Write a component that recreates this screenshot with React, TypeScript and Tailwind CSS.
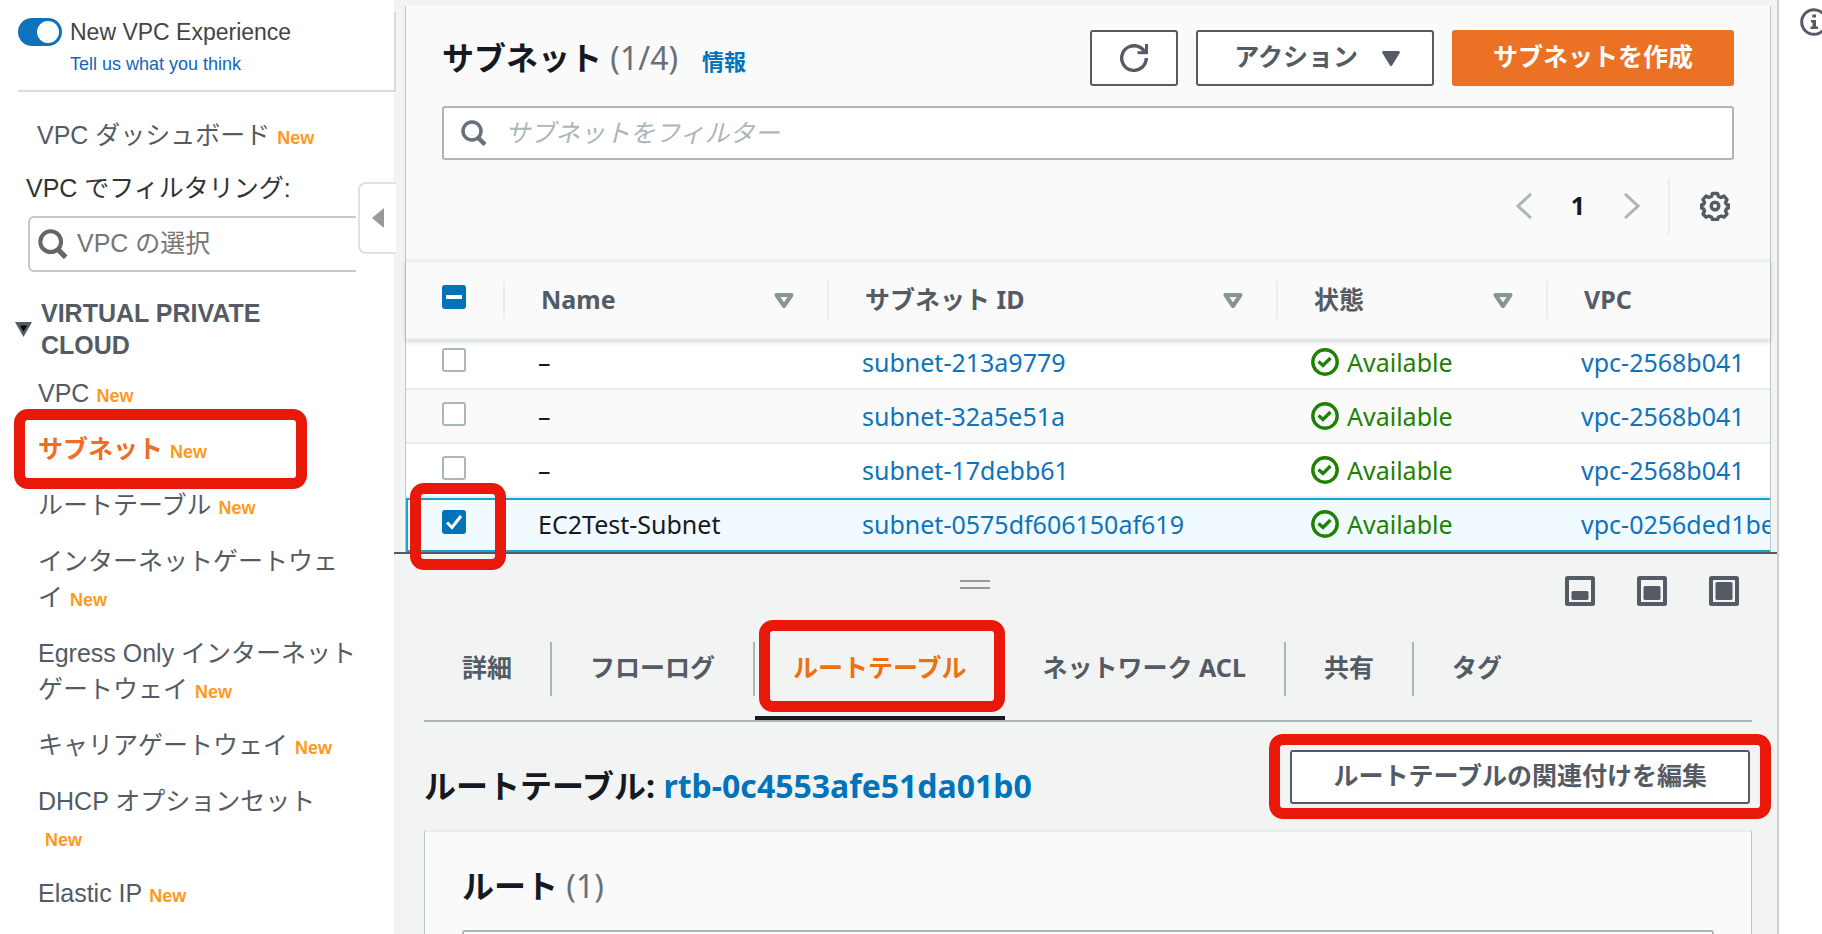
import React from 'react';

const navItems = [
  { label: 'VPC' },
  { label: 'サブネット', active: true },
  { label: 'ルートテーブル' },
  { label: 'インターネットゲートウェイ' },
  { label: 'Egress Only インターネットゲートウェイ' },
  { label: 'キャリアゲートウェイ' },
  { label: 'DHCP オプションセット' },
  { label: 'Elastic IP' },
];

const subnets = [
  { name: '–', id: 'subnet-213a9779', vpc: 'vpc-2568b041', selected: false },
  { name: '–', id: 'subnet-32a5e51a', vpc: 'vpc-2568b041', selected: false },
  { name: '–', id: 'subnet-17debb61', vpc: 'vpc-2568b041', selected: false },
  { name: 'EC2Test-Subnet', id: 'subnet-0575df606150af619', vpc: 'vpc-0256ded1be', selected: true },
];

const columns = [
  { label: 'Name', width: 'w-[324px]' },
  { label: 'サブネット ID', width: 'w-[449px]' },
  { label: '状態', width: 'w-[270px]' },
  { label: 'VPC', width: '' },
];

const tabs = ['詳細', 'フローログ', 'ルートテーブル', 'ネットワーク ACL', '共有', 'タグ'];

const panelSizes = [
  { label: '小', y: 15, h: 9 },
  { label: '中', y: 10, h: 14 },
  { label: '大', y: 6, h: 18 },
];

function Highlight({ className }: { className: string }) {
  return (
    <span
      aria-hidden="true"
      className={`pointer-events-none absolute z-20 rounded-[14px] border-[11px] border-[#e8180b] ${className}`}
    />
  );
}

function NewBadge() {
  return <span className="ml-[7px] inline-block text-lg leading-6 font-bold text-[#ff9a1f]">New</span>;
}

function Checkbox({ label, state }: { label: string; state: 'on' | 'off' | 'mixed' }) {
  return (
    <span className="relative block h-6 w-6">
      <input
        type="checkbox"
        aria-label={label}
        defaultChecked={state === 'on'}
        className={`block h-6 w-6 appearance-none rounded-[3px] ${
          state === 'off' ? 'border-2 border-[#aab7b8] bg-white' : 'bg-[#0073bb]'
        }`}
      />
      {state !== 'off' && (
        <svg viewBox="0 0 24 24" className="pointer-events-none absolute inset-0 h-6 w-6" fill="none" stroke="#fff">
          {state === 'on' ? (
            <path d="M5 12.5 L10 17.5 L19 6" strokeWidth="3" />
          ) : (
            <path d="M4 12 H20" strokeWidth="4" />
          )}
        </svg>
      )}
    </span>
  );
}

function SearchIcon({ className }: { className: string }) {
  return (
    <svg viewBox="0 0 26 26" className={className} fill="none" stroke="currentColor">
      <circle cx="11" cy="11" r="9" strokeWidth="3.5" />
      <path d="M17 17.5 L24 24.5" strokeWidth="4.5" />
    </svg>
  );
}

function StatusIcon() {
  return (
    <svg viewBox="0 0 28 28" className="h-7 w-7 shrink-0" fill="none" stroke="#1d8102" strokeWidth="3.4">
      <circle cx="14" cy="14" r="12.2" />
      <path d="M7.5 13.5 L12 17.5 L19.5 10" />
    </svg>
  );
}

function Sidebar() {
  return (
    <aside className="relative w-[394px] shrink-0 bg-white pt-3 font-['Liberation_Sans','Noto_Sans_CJK_JP',sans-serif] text-[25px] leading-[33px] text-[#545b64]">
      <div className="relative z-10 -mr-0.5 ml-[18px] border-r-2 border-b-2 border-[#d9dcdc] pt-1.5 pb-3.5">
        <label className="flex items-center text-[23px] leading-7 text-[#444]">
          <input type="checkbox" role="switch" defaultChecked className="peer sr-only" />
          <span className="mr-2 flex h-7 w-11 items-center justify-end rounded-full bg-[#0f73bb] px-[3px]">
            <span className="h-[22px] w-[22px] rounded-full bg-white" />
          </span>
          New VPC Experience
        </label>
        <a href="#feedback" className="mt-1.5 ml-[52px] block text-lg leading-6 text-[#1166bb]">
          Tell us what you think
        </a>
      </div>

      <a href="#dashboard" className="mt-[27px] ml-[37px] block">
        VPC ダッシュボード
        <NewBadge />
      </a>

      <label htmlFor="vpc-filter" className="mt-5 ml-[26px] block text-[#333]">
        VPC でフィルタリング:
      </label>
      <div className="mt-[11px] mr-[38px] ml-7 flex h-14 items-center rounded-l-md border-2 border-r-0 border-[#c8c8c8] pl-2">
        <SearchIcon className="h-[30px] w-[30px] shrink-0 text-[#666]" />
        <input
          id="vpc-filter"
          type="text"
          placeholder="VPC の選択"
          className="ml-[9px] w-full min-w-0 pb-0.5 outline-none placeholder:text-[#757575]"
        />
      </div>

      <button
        type="button"
        aria-label="ナビゲーションを閉じる"
        className="absolute top-[182px] -right-0.5 z-10 flex h-[72px] w-[38px] items-center justify-center rounded-l-lg border-2 border-r-0 border-[#dfe2e2] bg-white"
      >
        <svg viewBox="0 0 12 20" className="h-5 w-3" fill="#999">
          <path d="M12 0 V20 L0 10 Z" />
        </svg>
      </button>

      <div className="mt-[25px] ml-[15px] flex items-center leading-8 font-bold">
        <svg viewBox="0 0 17 15" className="mr-[9px] h-[15px] w-[17px] shrink-0">
          <path d="M0 0 H17 L8.5 15 Z" fill="#545b64" />
          <path d="M5 3.5 H12 L8.5 9.5 Z" fill="#000" />
        </svg>
        <h2 className="w-[240px]">VIRTUAL PRIVATE CLOUD</h2>
      </div>

      <ul className="mt-3.5 mr-9 ml-[38px] space-y-5 leading-9">
        {navItems.map((item) => (
          <li key={item.label} className="relative">
            <a href="#nav" className={item.active ? 'font-bold text-[#eb6f25]' : ''}>
              {item.label}
              <NewBadge />
            </a>
            {item.active && <Highlight className="-top-[22px] -left-6 h-20 w-[293px]" />}
          </li>
        ))}
      </ul>
    </aside>
  );
}

function Toolbar() {
  return (
    <div className="bg-[#fafafa] px-9 pt-6 pb-[26px]">
      <div className="flex items-center">
        <h1 className="text-[32px] leading-10 font-bold text-[#16191f]">
          サブネット <span className="font-normal text-[#687078]">(1/4)</span>
        </h1>
        <a href="#info" className="mt-1.5 ml-6 text-[22px] leading-8 font-bold text-[#0073bb]">
          情報
        </a>
        <div className="ml-auto flex gap-[18px] font-bold text-[#545b64]">
          <button
            type="button"
            aria-label="更新"
            className="flex h-14 w-[88px] items-center justify-center rounded-[3px] border-2 border-[#545b64] bg-white"
          >
            <svg viewBox="0 0 28 28" className="h-7 w-7" fill="none" stroke="currentColor" strokeWidth="3.4">
              <path d="M26.3 14 A12.3 12.3 0 1 1 20 3.3 Q23 5 25 8" />
              <path d="M26.5 0 V9" strokeWidth="3" />
              <path d="M17.5 8.7 H28" strokeWidth="3" />
            </svg>
          </button>
          <button
            type="button"
            className="flex h-14 items-center gap-6 rounded-[3px] border-2 border-[#545b64] bg-white pr-8 pl-9"
          >
            <span className="pb-1">アクション</span>
            <svg viewBox="0 0 18 15" className="h-[15px] w-[18px]" fill="currentColor">
              <path d="M1 0 H17 L18 1.5 L9.7 15 H8.3 L0 1.5 Z" />
            </svg>
          </button>
          <button type="button" className="h-14 rounded-[3px] bg-[#eb7125] px-[41px] pb-1 text-white">
            サブネットを作成
          </button>
        </div>
      </div>

      <div className="mt-5 flex h-[54px] items-center rounded-[3px] border-2 border-[#aab7b8] bg-white pl-[17px]">
        <SearchIcon className="h-[26px] w-[26px] shrink-0 text-[#687078]" />
        <input
          type="text"
          aria-label="サブネットをフィルター"
          placeholder="サブネットをフィルター"
          className="ml-[18px] w-full pb-0.5 outline-none placeholder:text-[#aab7b8] placeholder:italic"
        />
      </div>

      <div className="mt-[18px] flex h-14 items-center justify-end">
        <button type="button" aria-label="前のページ">
          <svg viewBox="0 0 16 26" className="h-[26px] w-4" fill="none" stroke="#aab7b8" strokeWidth="3">
            <path d="M15 1 L2 13 L15 25" />
          </svg>
        </button>
        <button type="button" className="w-[92px] pb-0.5 text-center font-bold text-[#16191f]">
          1
        </button>
        <button type="button" aria-label="次のページ">
          <svg viewBox="0 0 16 26" className="h-[26px] w-4" fill="none" stroke="#aab7b8" strokeWidth="3">
            <path d="M1 1 L14 13 L1 25" />
          </svg>
        </button>
        <span className="ml-7 h-14 w-0.5 bg-[#eaeded]" />
        <button type="button" aria-label="設定" className="mr-1 ml-[30px]">
          <svg viewBox="0 0 30 30" className="h-[30px] w-[30px]" fill="none" stroke="#545b64" strokeLinejoin="round" strokeWidth="3.4">
            <path d="M12.5 2.5 h5 l1 3 l2.5 1 l3 -1.5 l3 3.5 l-1.5 3 l1 2 l2 .5 v3 l-2 .8 l-1 2.2 l1.5 3 l-3 3.2 l-3 -1.2 l-2.5 1 l-1 2.5 h-5 l-1 -2.5 l-2.5 -1 l-3 1.2 l-3 -3.2 l1.5 -3 l-1 -2.2 l-2 -.8 v-3 l2 -.5 l1 -2 l-1.5 -3 l3 -3.5 l3 1.5 l2.5 -1 Z" />
            <circle cx="15" cy="15" r="3.8" />
          </svg>
        </button>
      </div>
    </div>
  );
}

function SubnetTable() {
  return (
    <table className="w-full table-fixed border-separate border-spacing-0">
      <thead className="relative shadow-[0_2px_5px_rgba(0,28,36,0.18)]">
        <tr className="bg-[#fafafa] text-left text-[#545b64]">
          <th className="h-20 w-[99px] border-y-2 border-[#eaeded] p-0">
            <div className="flex h-[38px] items-start border-r-2 border-[#eaeded] pt-1 pl-9">
              <Checkbox label="すべて選択" state="mixed" />
            </div>
          </th>
          {columns.map((col) => (
            <th key={col.label} className={`border-y-2 border-[#eaeded] p-0 ${col.width}`}>
              <div
                className={`flex h-[38px] items-center justify-between pr-[33px] pl-9 ${
                  col.width ? 'border-r-2 border-[#eaeded]' : ''
                }`}
              >
                <span className="pb-0.5">{col.label}</span>
                {col.width && (
                  <svg viewBox="0 0 20 15" className="h-[15px] w-5" fill="none" stroke="#879596" strokeWidth="4">
                    <path d="M2.5 2 H17.5 L10 13 Z" strokeLinejoin="round" />
                  </svg>
                )}
              </div>
            </th>
          ))}
        </tr>
      </thead>
      <tbody>
        {subnets.map((subnet, index) => {
          const height = index === 0 ? 'h-[50px]' : 'h-[54px]';
          const line = subnet.selected ? 'border-y-2 border-[#1aa3c8]' : 'border-b-2 border-[#eaeded]';
          const cell = `${height} ${line} overflow-hidden whitespace-nowrap p-0 pb-2.5 pl-[33px] align-bottom`;
          return (
            <tr key={subnet.id} className={subnet.selected ? 'bg-[#f1faff]' : 'bg-white even:bg-[#fafafa]'}>
              <td
                className={`relative p-0 pb-4 align-bottom ${line} ${
                  subnet.selected ? 'border-l-2 pl-[34px]' : 'pl-9'
                }`}
              >
                <Checkbox label={subnet.id} state={subnet.selected ? 'on' : 'off'} />
                {subnet.selected && <Highlight className="-top-[17px] left-0.5 h-[87px] w-24" />}
              </td>
              <td className={`${cell} text-[#16191f]`}>{subnet.name}</td>
              <td className={cell}>
                <a href="#subnet" className="text-[#0f73bb]">{subnet.id}</a>
              </td>
              <td className={cell}>
                <span className="flex items-center gap-2 text-[#1d8102]">
                  <StatusIcon />
                  Available
                </span>
              </td>
              <td className={cell}>
                <a href="#vpc" className="text-[#0f73bb]">{subnet.vpc}</a>
              </td>
            </tr>
          );
        })}
      </tbody>
    </table>
  );
}

function SplitPanel() {
  return (
    <section className="flex-1 border-t-2 border-[#545b64] bg-[#f2f3f3] pt-[22px]">
      <div className="flex h-[30px] items-start pr-[38px]">
        <div className="flex flex-1 justify-center pt-1">
          <button type="button" aria-label="サイズ変更" className="h-[9px] w-[30px] border-y-2 border-[#999]" />
        </div>
        <div className="ml-2.5 flex gap-[42px] text-[#545b64]">
          {panelSizes.map((size) => (
            <button key={size.label} type="button" aria-label={size.label}>
              <svg viewBox="0 0 30 30" className="h-[30px] w-[30px]">
                <rect x="2" y="2" width="26" height="26" rx="0.5" fill="none" stroke="currentColor" strokeWidth="4" />
                <rect x="6.5" y={size.y} width="17" height={size.h} rx="1.5" fill="currentColor" />
              </svg>
            </button>
          ))}
        </div>
      </div>

      <div className="mr-[25px] ml-[30px]">
        <div role="tablist" className="mt-9 flex border-b-2 border-[#aab7b8] font-bold text-[#545b64]">
          {tabs.map((tab, index) => {
            const active = tab === 'ルートテーブル';
            const divider = !active && index < tabs.length - 1;
            return (
              <div key={tab} className="relative pb-6">
                <button
                  type="button"
                  role="tab"
                  aria-selected={active}
                  className={`h-[54px] px-[38px] pb-1 whitespace-nowrap ${active ? 'text-[#ec7211]' : ''} ${
                    divider ? 'border-r-2 border-[#aab7b8]' : ''
                  }`}
                >
                  {tab}
                </button>
                {active && <span className="absolute inset-x-0 bottom-0 h-1 bg-[#16191f]" />}
                {active && <Highlight className="-top-[22px] right-0 left-1 h-[92px]" />}
              </div>
            );
          })}
        </div>

        <div className="mt-7 flex items-end justify-between pr-0.5">
          <h2 className="text-[32px] leading-9 font-bold text-[#16191f]">
            ルートテーブル: <a href="#rtb" className="text-[#0073bb]">rtb-0c4553afe51da01b0</a>
          </h2>
          <div className="relative">
            <button
              type="button"
              className="block h-[54px] rounded-[3px] border-2 border-[#545b64] bg-white px-[41px] pb-1 font-bold text-[#545b64]"
            >
              ルートテーブルの関連付けを編集
            </button>
            <Highlight className="-inset-x-[21px] -top-4 -bottom-[15px]" />
          </div>
        </div>

        <div className="mt-[26px] border-x border-t-2 border-x-[#bcc7c8] border-t-[#eaeded] bg-[#fafafa] px-[37px] pt-[34px]">
          <h3 className="text-[32px] leading-10 font-bold text-[#16191f]">
            ルート <span className="font-normal text-[#687078]">(1)</span>
          </h3>
          <input
            type="text"
            aria-label="ルートをフィルター"
            className="mt-6 block h-[54px] w-full rounded-[3px] border-2 border-[#aab7b8] bg-white"
          />
        </div>
      </div>
    </section>
  );
}

export default function App() {
  return (
    <div className="flex h-screen overflow-hidden bg-white">
      <Sidebar />
      <main className="flex min-w-0 flex-1 flex-col border-r-2 border-[#ccd3d3] bg-[#f2f3f3] font-['Noto_Sans','Noto_Sans_CJK_JP',sans-serif] text-[25px] leading-8">
        <section className="mt-1.5 mr-1.5 ml-[11px] border-x border-[#bcc7c8]">
          <Toolbar />
          <SubnetTable />
        </section>
        <SplitPanel />
      </main>
      <aside className="w-[43px] shrink-0 overflow-hidden bg-white pt-2 pl-[21px]">
        <button type="button" aria-label="情報">
          <svg viewBox="0 0 28 28" className="h-7 w-7" fill="none" stroke="#545b64" strokeWidth="3">
            <circle cx="14" cy="14" r="12.3" />
            <path d="M12.3 6.5 H16 V9.5 H12.3 Z M11 12 H16 V18.5 H18 V21 H10.5 V18.5 H12.5 V14.5 H11 Z" fill="#545b64" stroke="none" />
          </svg>
        </button>
      </aside>
    </div>
  );
}
